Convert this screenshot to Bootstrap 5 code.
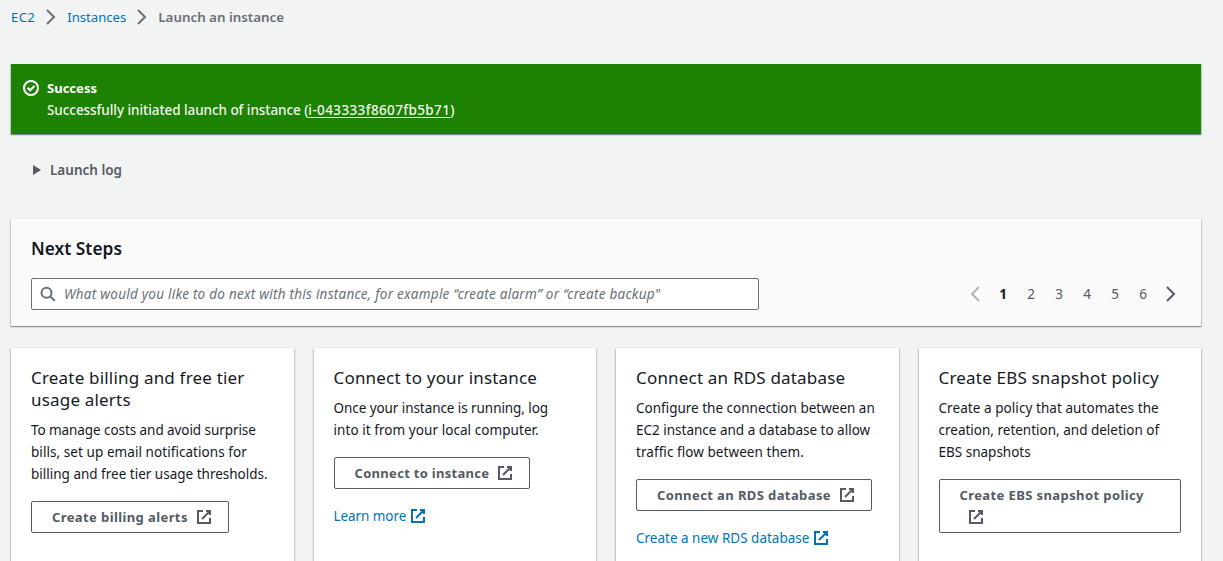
<!DOCTYPE html>
<html lang="en">
<head>
<meta charset="utf-8">
<meta name="viewport" content="width=device-width, initial-scale=1">
<title>Launch an instance</title>
<link rel="stylesheet" href="https://cdn.jsdelivr.net/npm/bootstrap@5.3.0/dist/css/bootstrap.min.css">
<style>
  body { font: 400 13.5px/22px "Noto Sans", "Open Sans", sans-serif; background: #f2f3f3; color: #16191f; height: 561px; overflow: hidden; }
  a { color: #0073bb; text-decoration: none; }
  .page { width: 1190px; margin-left: 11px; padding-top: 6px; }
  .ico { width: 16px; height: 16px; fill: none; stroke: currentColor; stroke-width: 2; flex: none; }
  .crumbs { color: #687078; font-size: 13.15px; height: 22px; gap: 8px; }
  .crumbs .current { font-weight: 600; font-size: 13.35px; }
  .crumbs .first { letter-spacing: .35px; }
  .panel { border-radius: 0; box-shadow: 0 1px 1px 0 rgba(0,28,36,.3), 1px 1px 1px 0 rgba(0,28,36,.15), -1px 1px 1px 0 rgba(0,28,36,.15); }
  .flash { margin-top: 36px; height: 70px; padding: 13px 12px; gap: 8px; background: #1d8102; color: #fff; }
  .flash .ico { margin-top: 3px; }
  .flash-title { font-weight: 700; font-size: 13.04px; }
  .flash-text { font-weight: 500; font-size: 13.5px; letter-spacing: -.06px; color: #f2f8f0; }
  .flash-text a { color: inherit; text-decoration: underline; text-underline-offset: 2px; letter-spacing: .38px; }
  .log { margin: 25px 0 38px 22px; gap: 9px; font-weight: 600; font-size: 13.5px; color: #545b64; height: 22px; }
  .log svg { width: 8px; height: 10px; fill: currentColor; }
  .head { height: 107px; background: #fafafa; padding: 19px 22px 0 20px; box-shadow: 0 -1px 0 #eaeded, 0 1px 0 #879596, 0 1px 1px 0 rgba(0,28,36,.3), 1px 1px 1px 0 rgba(0,28,36,.15), -1px 1px 1px 0 rgba(0,28,36,.15); }
  .head h2 { font-size: 17.35px; line-height: 22px; font-weight: 600; margin: -1px 0 19px; }
  .search { width: 728px; height: 32px; border: 1px solid #687078; border-radius: 2px; background: #fff; padding: 0 8px 0 7.5px; gap: 8.5px; color: #687078; }
  .search span { font-style: italic; letter-spacing: .25px; }
  .pages { color: #545b64; gap: 6px; }
  .pages span { width: 28px; text-align: center; }
  .pages .on { color: #16191f; font-weight: 700; }
  .pages .off { color: #aab7b8; }
  .tiles { display: grid; grid-template-columns: repeat(4, 1fr); gap: 20px; margin-top: 22px; }
  .tile { background: #fff; height: 240px; padding: 19px 20px; white-space: nowrap; box-shadow: 0 -1px 0 #eaeded, 0 1px 1px 0 rgba(0,28,36,.3), 1px 1px 1px 0 rgba(0,28,36,.15), -1px 1px 1px 0 rgba(0,28,36,.15); }
  .tile h3 { font-size: 17px; line-height: 22px; font-weight: 400; letter-spacing: .19px; margin: 0 0 8px; }
  .tile p { margin: 0 0 16px; }
  .tight { letter-spacing: -.07px; }
  .loose { letter-spacing: .065px; }
  .action { --bs-btn-padding-x: 20px; --bs-btn-padding-y: 4px; --bs-btn-border-radius: 2px; --bs-btn-font-size: 13px; --bs-btn-line-height: 22px; --bs-btn-font-weight: 700; --bs-btn-color: #545b64; --bs-btn-border-color: #545b64; --bs-btn-bg: #fff; display: block; width: fit-content; padding-right: 16px; text-align: left; letter-spacing: .4px; }
  .action.narrow { letter-spacing: .3px; }
  .action.wide { width: 100%; }
  .action .ico { margin-left: 8px; vertical-align: -3px; }
  .more { display: block; width: fit-content; margin-top: 16px; }
  .more .ico { margin-left: 4px; vertical-align: -3px; }
</style>
</head>
<body>
<svg class="d-none">
  <symbol id="external" viewBox="0 0 16 16"><path d="M10 2h4v4M6 10l8-8M14 9.05V14H2V2h5"/></symbol>
  <symbol id="next" viewBox="0 0 16 16"><path d="m4 1 7 7-7 7"/></symbol>
  <symbol id="prev" viewBox="0 0 16 16"><path d="M12 1 5 8l7 7"/></symbol>
</svg>
<main class="page">
  <nav class="crumbs d-flex align-items-center">
    <a href="#" class="first">EC2</a>
    <svg class="ico"><use href="#next"/></svg>
    <a href="#">Instances</a>
    <svg class="ico"><use href="#next"/></svg>
    <span class="current">Launch an instance</span>
  </nav>

  <div class="flash panel d-flex" role="alert">
    <svg class="ico" viewBox="0 0 16 16"><circle cx="8" cy="8" r="7"/><path d="m4.5 7.8 2.6 2.5 4.4-4.3"/></svg>
    <div>
      <div class="flash-title">Success</div>
      <div class="flash-text">Successfully initiated launch of instance (<a href="#">i-043333f8607fb5b71</a>)</div>
    </div>
  </div>

  <div class="log d-flex align-items-center">
    <svg viewBox="0 0 8 10"><path d="M0 0v10l8-5z"/></svg>Launch log
  </div>

  <section class="head">
    <h2>Next Steps</h2>
    <div class="d-flex align-items-center justify-content-between">
      <div class="search d-flex align-items-center">
        <svg class="ico" viewBox="0 0 16 16"><circle cx="6.5" cy="6.8" r="5"/><path d="m10.2 10.5 4.6 4.3"/></svg>
        <span>What would you like to do next with this instance, for example “create alarm” or “create backup"</span>
      </div>
      <div class="pages d-flex align-items-center">
        <svg class="ico off"><use href="#prev"/></svg>
        <div class="d-flex"><span class="on">1</span><span>2</span><span>3</span><span>4</span><span>5</span><span>6</span></div>
        <svg class="ico"><use href="#next"/></svg>
      </div>
    </div>
  </section>

  <section class="tiles">
    <article class="tile">
      <h3>Create billing and free tier<br>usage alerts</h3>
      <p><span class="tight">To manage costs and avoid surprise</span><br><span class="loose">bills, set up email notifications for</span><br>billing and free tier usage thresholds.</p>
      <a href="#" class="btn action">Create billing alerts<svg class="ico"><use href="#external"/></svg></a>
    </article>
    <article class="tile">
      <h3>Connect to your instance</h3>
      <p><span class="tight">Once your instance is running, log</span><br><span class="loose">into it from your local computer.</span></p>
      <a href="#" class="btn action narrow">Connect to instance<svg class="ico"><use href="#external"/></svg></a>
      <a href="#" class="more tight">Learn more<svg class="ico"><use href="#external"/></svg></a>
    </article>
    <article class="tile">
      <h3>Connect an RDS database</h3>
      <p>Configure the connection between an<br>EC2 instance and a database to allow<br><span class="loose">traffic flow between them.</span></p>
      <a href="#" class="btn action">Connect an RDS database<svg class="ico"><use href="#external"/></svg></a>
      <a href="#" class="more">Create a new RDS database<svg class="ico"><use href="#external"/></svg></a>
    </article>
    <article class="tile">
      <h3>Create EBS snapshot policy</h3>
      <p><span class="loose">Create a policy that automates the</span><br>creation, retention, and deletion of<br>EBS snapshots</p>
      <a href="#" class="btn action wide">Create EBS snapshot policy<br><svg class="ico"><use href="#external"/></svg></a>
    </article>
  </section>
</main>
<script src="https://cdn.jsdelivr.net/npm/bootstrap@5.3.0/dist/js/bootstrap.bundle.min.js"></script>
</body>
</html>
